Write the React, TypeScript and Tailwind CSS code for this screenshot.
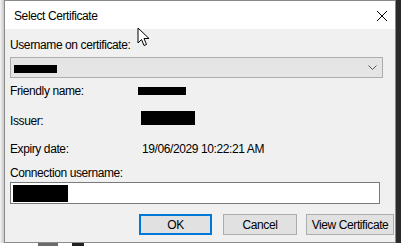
const font = { fontFamily: '"Liberation Sans", Arial, sans-serif' }

function Redact({ w, h, className = '' }: { w: string; h: string; className?: string }) {
  return <div className={`bg-black ${w} ${h} ${className}`} />
}

function Btn({ label, width, primary, className = '' }: { label: string; width: string; primary?: boolean; className?: string }) {
  return (
    <button
      className={`${width} h-[21px] flex items-center justify-center bg-[#e1e1e1] text-[12px] text-black ${
        primary ? 'border-2 border-[#0078d7]' : 'border border-[#adadad]'
      } ${className}`}
    >
      {label}
    </button>
  )
}

function InfoRow({ label, children, className = '' }: { label: string; children: React.ReactNode; className?: string }) {
  return (
    <div className={`flex items-center h-[16px] ${className}`}>
      <span className="w-[128px] shrink-0">{label}</span>
      {children}
    </div>
  )
}

export default function App() {
  return (
    <div className="w-[401px] h-[246px] overflow-hidden flex flex-col bg-white tracking-[-0.4px]" style={font}>
      <div className="flex h-[243px]">
        <div className="w-[4px] bg-gradient-to-r from-[#f4f4f4] to-[#c8c8c8]" />

        <div className="w-[392px] flex flex-col border border-[#8a8a8a] text-[12px] text-black">
          {/* title bar */}
          <div className="h-[28px] bg-white flex items-center justify-between pl-[9px] pr-[6px] relative">
            <span className="text-[12px] mt-[1px]">Select Certificate</span>
            <svg width="12" height="12" viewBox="0 0 12 12" className="mr-[1px] mt-[1px]">
              <path d="M1 1 L11 11 M11 1 L1 11" stroke="#000" strokeWidth="1" />
            </svg>
            <svg
              width="13"
              height="20"
              viewBox="0 0 13 20"
              className="absolute left-[132px] top-[26px] z-10"
            >
              <path
                d="M1 1 L1 16 L4.5 12.5 L7 18.5 L9.5 17.5 L7 11.5 L12 11.5 Z"
                fill="#fff"
                stroke="#000"
                strokeWidth="1"
                strokeLinejoin="round"
              />
            </svg>
          </div>

          {/* body */}
          <div className="flex-1 bg-[#f0f0f0] flex flex-col pl-[5px] pt-[8px]">
            <div className="h-[16px] leading-[16px]">Username on certificate:</div>
            <div className="mt-[4px] w-[373px] h-[21px] bg-[#e5e5e5] border border-[#adadad] flex items-center justify-between pl-[3px] pr-[5px]">
              <Redact w="w-[43px]" h="h-[8px]" className="mt-[3px]" />
              <svg width="9" height="5" viewBox="0 0 9 5">
                <path d="M0.5 0.5 L4.5 4.5 L8.5 0.5" stroke="#555" fill="none" strokeWidth="1" />
              </svg>
            </div>

            <InfoRow label="Friendly name:" className="mt-[5px]">
              <Redact w="w-[48px]" h="h-[8px]" />
            </InfoRow>

            <InfoRow label="Issuer:" className="mt-[14px]">
              <Redact w="w-[54px]" h="h-[14px]" className="ml-[3px] -mt-[6px]" />
            </InfoRow>

            <InfoRow label="Expiry date:" className="mt-[12px]">
              <span className="ml-[4px]">19/06/2029 10:22:21 AM</span>
            </InfoRow>

            <div className="mt-[8px] h-[16px] leading-[16px]">Connection username:</div>
            <div className="mt-[1px] w-[370px] h-[22px] bg-white border border-[#7a7a7a] flex items-center pl-[2px]">
              <Redact w="w-[55px]" h="h-[17px]" />
            </div>

            <div className="mt-[10px] flex pl-[129px]">
              <Btn label="OK" width="w-[73px]" primary />
              <Btn label="Cancel" width="w-[74px]" className="ml-[11px]" />
              <Btn label="View Certificate" width="w-[88px]" className="ml-[9px]" />
            </div>
          </div>
        </div>

        <div className="flex-1 bg-[#2a2a2a]" />
      </div>
      <div className="flex-1 flex items-start gap-[14px] pl-[38px]">
        <div className="w-[20px] h-[3px] bg-[#6a6a6a]" />
        <div className="w-[12px] h-[3px] bg-[#222]" />
      </div>
    </div>
  )
}
